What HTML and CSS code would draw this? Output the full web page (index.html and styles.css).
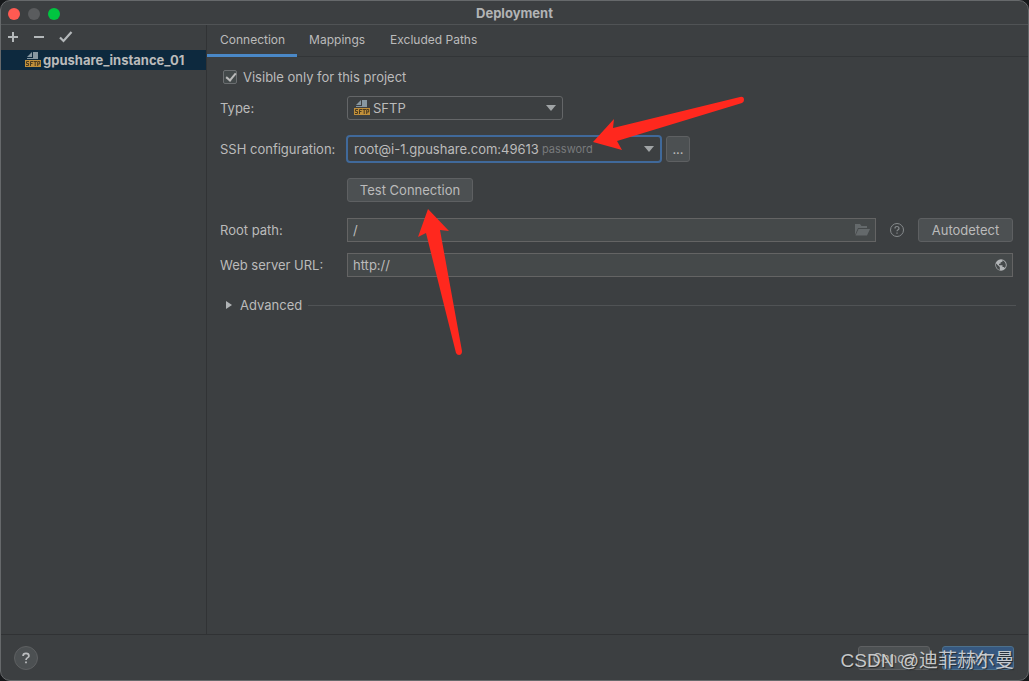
FILE: index.html
```html
<!DOCTYPE html>
<html lang="en">
<head>
<meta charset="utf-8">
<title>Deployment</title>
<link rel="stylesheet" href="styles.css">
</head>
<body>
<svg class="defs" aria-hidden="true">
  <symbol id="sftp" viewBox="0 0 16 16">
    <path d="M7 0v5H2z" fill="#8797a1"/>
    <path d="M8 0h5v7H2V6h6z" fill="#8797a1"/>
    <path d="M0 8h16v7H0z" fill="#c08f3a"/>
    <path d="M4 9.500H1.500v2H3.500v2H1M5.500 14V9.500H8M5.500 11.500H7.500M8.500 9.500H12M10.200 9.500V14M12.700 14V9.500H14.700V12H12.700" fill="none" stroke="#4b3b20"/>
  </symbol>
</svg>
<div class="window">
  <header class="titlebar">
    <div class="lights">
      <button class="light close" aria-label="Close"></button>
      <button class="light minimize" aria-label="Minimize"></button>
      <button class="light maximize" aria-label="Zoom"></button>
    </div>
    <h1 class="title">Deployment</h1>
  </header>
  <div class="body">
    <aside class="sidebar">
      <div class="toolbar">
        <button class="tool" aria-label="Add"><svg viewBox="0 0 16 16"><path d="M8 3v10M3 8h10" stroke="#b4b8ba" stroke-width="2"/></svg></button>
        <button class="tool" aria-label="Remove"><svg viewBox="0 0 16 16"><path d="M3 8h10" stroke="#b4b8ba" stroke-width="2"/></svg></button>
        <button class="tool" aria-label="Use as default"><svg viewBox="0 0 16 16"><path d="M3 8.500l3.500 3.500L14.500 3" fill="none" stroke="#b4b8ba" stroke-width="2.200"/></svg></button>
      </div>
      <ul class="servers">
        <li><a class="server" href="#server"><svg class="sftp" aria-hidden="true"><use href="#sftp"/></svg>gpushare_instance_01</a></li>
      </ul>
    </aside>
    <main class="main">
      <nav class="tabs">
        <a class="tab active" href="#connection">Connection</a>
        <a class="tab" href="#mappings">Mappings</a>
        <a class="tab" href="#excluded">Excluded Paths</a>
      </nav>
      <form class="form">
        <div class="check-row">
          <input class="check" type="checkbox" id="visible" checked>
          <label for="visible">Visible only for this project</label>
        </div>
        <div class="row type-row">
          <label class="label" for="type">Type:</label>
          <div class="combo type">
            <svg class="sftp" aria-hidden="true"><use href="#sftp"/></svg>
            <select id="type"><option>SFTP</option></select>
            <svg class="caret" viewBox="0 0 10 6" aria-hidden="true"><path d="M0 0h10L5 6z" fill="#a0a4a6"/></svg>
          </div>
        </div>
        <div class="row ssh-row">
          <label class="label" for="ssh">SSH configuration:</label>
          <div class="combo ssh">
            <select id="ssh"><option>root@i-1.gpushare.com:49613</option></select>
            <span class="hint">password</span>
            <svg class="caret" viewBox="0 0 10 6" aria-hidden="true"><path d="M0 0h10L5 6z" fill="#a0a4a6"/></svg>
          </div>
          <button class="btn more" type="button" aria-label="Browse configurations">...</button>
        </div>
        <div class="row test-row">
          <span class="label"></span>
          <button class="btn test" type="button">Test Connection</button>
        </div>
        <div class="row root-row">
          <label class="label" for="root">Root path:</label>
          <div class="field">
            <input id="root" type="text" value="/">
            <svg class="folder" viewBox="0 0 16 14" aria-hidden="true"><path d="M1 12V1h5l1.500 2H13v2H4z" fill="#64696b"/><path d="M4.500 6H16l-3 6.500H1.500z" fill="#64696b"/></svg>
          </div>
          <button class="info" type="button" aria-label="Root path help"><svg viewBox="0 0 16 16"><circle cx="8" cy="8" r="6.500" fill="none" stroke="#868a8c"/><path d="M6 6.500Q6 4.500 8 4.500T10 6.400C10 7.700 8 7.700 8 9.300M8 10.500v1.300" fill="none" stroke="#868a8c" stroke-width="1.200"/></svg></button>
          <button class="btn auto" type="button">Autodetect</button>
        </div>
        <div class="row">
          <label class="label" for="url">Web server URL:</label>
          <div class="field">
            <input id="url" type="text" value="http://">
            <svg class="globe" viewBox="0 0 12 12" aria-hidden="true"><circle cx="6" cy="6" r="5.700" fill="#b2b5b7"/><path d="M1 4.500L4.800 8v3C2.500 10.500.8 8.500 1 4.500zM7.500 1.200v1.300L5.500 3.500v1.300H4v1.400h3.500v1.700h1.300l1 1C11.500 7.500 11.500 3 7.500 1.200z" fill="#45494a"/></svg>
          </div>
        </div>
        <div class="advanced">
          <button class="disclosure" type="button" aria-expanded="false"><svg viewBox="0 0 6 8" aria-hidden="true"><path d="M0 0l6 4-6 4z" fill="#b0b3b5"/></svg>Advanced</button>
          <hr class="rule">
        </div>
      </form>
    </main>
  </div>
  <footer class="footer">
    <button class="help" aria-label="Help"><svg viewBox="0 0 24 24"><path d="M8.800 9.800Q8.800 7 12 7T15.200 9.700C15.200 11.700 12 11.500 12 14.200M12 15.700v2.100" fill="none" stroke="#bbbdbf" stroke-width="1.900"/></svg></button>
    <div class="actions">
      <button class="btn action">Cancel</button>
      <button class="btn action ok">OK</button>
    </div>
    <span class="watermark">CSDN @迪菲赫尔曼</span>
  </footer>
  <svg class="arrow one" viewBox="0 0 152 56" aria-hidden="true"><path d="M1 46L22 23 21 32 148 1Q152 0 152 4 152 6 150 7L25 45 30 54z" fill="#ff281e"/></svg>
  <svg class="arrow two" viewBox="0 0 46 148" aria-hidden="true"><path d="M11 1L32 23 23 22 45 143Q45 147 42 147 40 147 39 145L9 25 1 29z" fill="#ff281e"/></svg>
</div>
</body>
</html>
```
FILE: styles.css
```css
* { box-sizing: border-box; }
body {
  margin: 0;
  background: #16181a;
  color: #bbbbbb;
  font: 13px/16px Inter, "Noto Sans CJK SC", sans-serif;
}
button, input, select { font: inherit; color: inherit; margin: 0; }
button { cursor: default; }
a { color: inherit; text-decoration: none; }
svg { display: block; flex: none; }
.defs { position: absolute; width: 0; height: 0; }

.window {
  position: relative;
  display: flex;
  flex-direction: column;
  min-height: 100vh;
  background: #3c3f41;
  border: 1px solid #66696b;
  border-radius: 10px;
  overflow: hidden;
}
.titlebar {
  display: grid;
  grid-template-columns: 1fr auto 1fr;
  align-items: center;
  height: 24px;
  border-bottom: 1px solid #505355;
}
.lights { display: flex; gap: 8px; padding: 2px 0 0 7px; }
.light { width: 12px; height: 12px; padding: 0; border: 0; border-radius: 50%; }
.close { background: #ff5a52; }
.minimize { background: #5a5c5e; }
.maximize { background: #00c540; }
.title { margin: 0; font-size: 13px; font-weight: 700; line-height: 16px; color: #b2b4b5; }

.body { display: flex; flex: 1; }
.sidebar { width: 206px; border-right: 1px solid #313335; }
.toolbar { display: flex; gap: 10px; padding: 4px 0 5px 4px; }
.tool { width: 16px; height: 16px; padding: 0; border: 0; background: none; }
.servers { list-style: none; margin: 0; padding: 0; }
.server {
  display: flex;
  align-items: center;
  gap: 2px;
  height: 20px;
  padding-left: 24px;
  background: #0d293e;
  font-weight: 700;
}
.sftp { width: 16px; height: 16px; }

.main { flex: 1; min-width: 0; }
.tabs { display: flex; height: 32px; border-bottom: 1px solid #323537; font-size: 12px; }
.tab { height: 32px; padding: 7px 13px 0 12px; }
.tab:first-child { padding: 7px 12px 0 13px; }
.active { border-bottom: 3px solid #4a88c7; }

.form { padding: 13px 15px 0 13px; }
.check-row { display: flex; align-items: center; gap: 6px; padding-left: 3px; height: 14px; }
.check {
  appearance: none;
  width: 14px;
  height: 14px;
  border: 1px solid #6b6e70;
  border-radius: 2px;
  background: #43494a;
}
.check:checked::before {
  content: "";
  display: block;
  width: 4px;
  height: 8px;
  margin: 0 0 0 4px;
  border: solid #bbbbbb;
  border-width: 0 2px 2px 0;
  transform: rotate(40deg);
}
.row { display: flex; align-items: center; }
.label { width: 127px; flex: none; }
.type-row { margin-top: 12px; }
.ssh-row { margin-top: 15px; }
.test-row { margin: 15px 0 16px; }
.root-row { margin-bottom: 11px; }
.combo {
  position: relative;
  display: flex;
  align-items: center;
  height: 24px;
  border: 1px solid #646668;
  border-radius: 3px;
}
.combo select {
  appearance: none;
  flex: 1;
  min-width: 0;
  height: 100%;
  padding: 0 24px 0 3px;
  border: 0;
  background: transparent;
  outline: 0;
}
.caret { position: absolute; right: 6px; width: 10px; height: 6px; pointer-events: none; }
.type { width: 216px; padding-left: 6px; }
.ssh {
  width: 316px;
  height: 28px;
  margin-left: -1px;
  padding-left: 3px;
  border: 2px solid #40699a;
  border-radius: 4px;
}
.hint { position: absolute; left: 194px; font-size: 11px; color: #787a7c; pointer-events: none; }
.btn {
  height: 24px;
  padding: 0 13px;
  border: 1px solid #5e6062;
  border-radius: 3px;
  background: #4c5052;
}
.more { width: 24px; height: 26px; margin-left: 4px; padding: 0; }
.test { width: 126px; padding: 0; }
.field {
  display: flex;
  align-items: center;
  flex: 1;
  height: 24px;
  padding: 0 5px;
  border: 1px solid #646464;
  background: #45494a;
}
.field input { flex: 1; min-width: 0; padding: 0; border: 0; outline: 0; background: transparent; }
.folder { width: 16px; height: 14px; }
.globe { width: 12px; height: 12px; }
.info { width: 16px; height: 16px; margin: 0 13px; padding: 0; border: 0; background: none; }
.auto { width: 95px; padding: 0; }
.advanced { display: flex; align-items: center; gap: 6px; margin: 20px -3px 0 0; }
.disclosure { display: flex; align-items: center; gap: 8px; padding: 0 0 0 6px; border: 0; background: none; }
.disclosure svg { width: 6px; height: 8px; }
.rule { flex: 1; margin: 0; border: 0; border-top: 1px solid #505355; }

.footer {
  position: relative;
  display: flex;
  justify-content: space-between;
  align-items: center;
  height: 46px;
  padding: 0 14px 0 13px;
  border-top: 1px solid #303234;
}
.help { width: 24px; height: 24px; padding: 0; border: 1px solid #5e6062; border-radius: 50%; background: #4c5052; }
.help svg { width: 22px; height: 22px; }
.actions { display: flex; gap: 12px; }
.action { width: 72px; padding: 0; }
.ok { background: #365880; border-color: #4c708c; }
.watermark {
  position: absolute;
  right: 14px;
  top: 14px;
  font: 19px/24px "Liberation Sans", "Noto Sans CJK SC", sans-serif;
  color: #d4d6d7;
  text-shadow: 1px 1px 1px #222425;
  white-space: nowrap;
  opacity: 0.9;
  pointer-events: none;
}
.arrow { position: absolute; pointer-events: none; }
.one { left: 591px; top: 95px; width: 152px; height: 56px; }
.two { left: 416px; top: 207px; width: 46px; height: 148px; }
```
